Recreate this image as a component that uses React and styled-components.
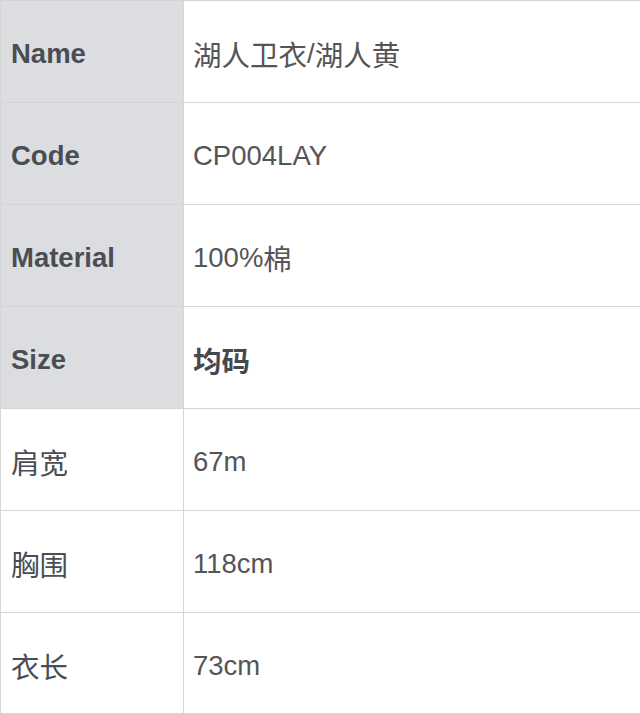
import React from "react";
import styled, { createGlobalStyle } from "styled-components";

const Global = createGlobalStyle`
  html, body { margin: 0; padding: 0; background: #ffffff; }
  body { font-family: "Liberation Sans", Arial, "Noto Sans CJK SC", sans-serif; }
`;

const Table = styled.div`
  display: flex;
  flex-direction: column;
  width: 100%;
  border-left: 1px solid #d6d6d6;
  overflow: hidden;
`;

const Row = styled.div`
  display: flex;
  height: 101px;
  border-top: 1px solid #d4d4d4;
  flex-shrink: 0;
`;

const Label = styled.div`
  width: 182px;
  flex-shrink: 0;
  box-sizing: border-box;
  padding: 4px 0 0 10px;
  display: flex;
  align-items: center;
  background: ${(p) => (p.$shaded ? "#dcdde0" : "#ffffff")};
  color: #4a4d54;
  font-size: 27.5px;
  font-weight: ${(p) => (p.$shaded ? 700 : 400)};
  font-family: "Liberation Sans", Arial, "Noto Sans CJK SC", sans-serif;
`;

const Value = styled.div`
  flex: 1;
  box-sizing: border-box;
  border-left: 1px solid #d6d6d6;
  padding: 4px 0 0 9px;
  display: flex;
  align-items: center;
  color: ${(p) => (p.$bold ? "#45484e" : "#555558")};
  font-size: 27.5px;
  font-weight: ${(p) => (p.$bold ? 700 : 400)};
  font-family: "Liberation Sans", Arial, "Noto Sans CJK SC", sans-serif;
`;

const Cjk = styled.span`
  font-size: 28.5px;
  font-family: "Noto Sans CJK SC", sans-serif;
`;

const rows = [
  { label: "Name", value: [<Cjk key="a">湖人卫衣</Cjk>, "/", <Cjk key="b">湖人黄</Cjk>], shaded: true },
  { label: "Code", value: "CP004LAY", shaded: true },
  { label: "Material", value: ["100%", <Cjk key="a">棉</Cjk>], shaded: true },
  { label: "Size", value: <Cjk>均码</Cjk>, shaded: true, bold: true },
  { label: <Cjk>肩宽</Cjk>, value: "67m" },
  { label: <Cjk>胸围</Cjk>, value: "118cm" },
  { label: <Cjk>衣长</Cjk>, value: "73cm" },
];

export default function App() {
  return (
    <>
      <Global />
      <Table>
        {rows.map((r, i) => (
          <Row key={i}>
            <Label $shaded={r.shaded}>{r.label}</Label>
            <Value $bold={r.bold}>{r.value}</Value>
          </Row>
        ))}
      </Table>
    </>
  );
}
